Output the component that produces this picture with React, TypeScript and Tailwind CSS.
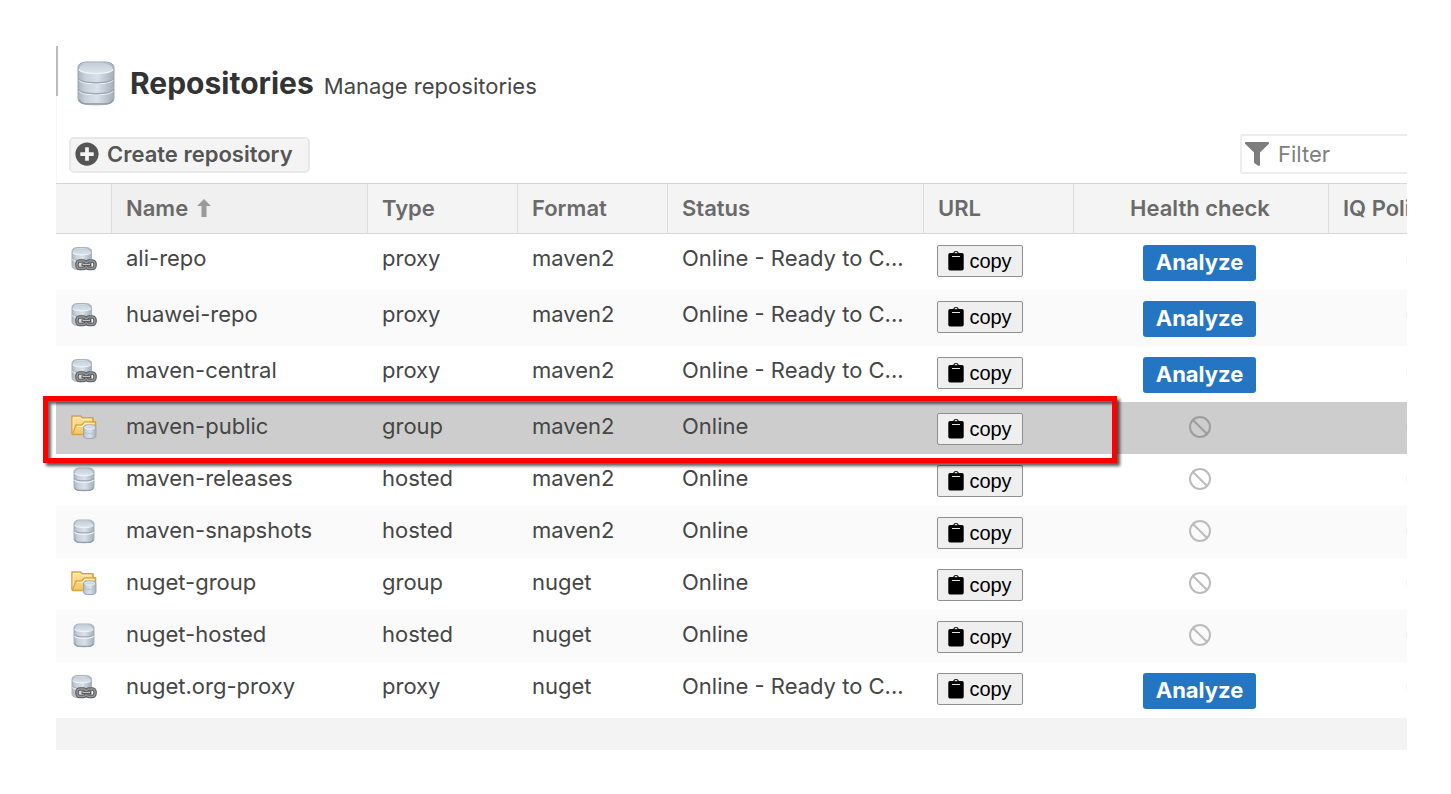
import React from "react";
import { Ban } from "lucide-react";
import { FaFilter, FaPlusCircle } from "react-icons/fa";

type Kind = "proxy" | "group" | "hosted";

interface Repository {
  name: string;
  kind: Kind;
  format: string;
  selected?: boolean;
}

const repositories: Repository[] = [
  { name: "ali-repo", kind: "proxy", format: "maven2" },
  { name: "huawei-repo", kind: "proxy", format: "maven2" },
  { name: "maven-central", kind: "proxy", format: "maven2" },
  { name: "maven-public", kind: "group", format: "maven2", selected: true },
  { name: "maven-releases", kind: "hosted", format: "maven2" },
  { name: "maven-snapshots", kind: "hosted", format: "maven2" },
  { name: "nuget-group", kind: "group", format: "nuget" },
  { name: "nuget-hosted", kind: "hosted", format: "nuget" },
  { name: "nuget.org-proxy", kind: "proxy", format: "nuget" },
];

function Gradients() {
  return (
    <svg width="0" height="0" className="absolute" aria-hidden="true">
      <defs>
        <linearGradient id="steel" x1="0" x2="1" y1="0" y2="0">
          <stop offset="0" stopColor="#a9b4bf" />
          <stop offset="0.2" stopColor="#c9d2dc" />
          <stop offset="0.55" stopColor="#d8e0e9" />
          <stop offset="1" stopColor="#a3afba" />
        </linearGradient>
        <linearGradient id="lid" x1="0" x2="0" y1="0" y2="1">
          <stop offset="0" stopColor="#c3ced9" />
          <stop offset="1" stopColor="#dbe4ec" />
        </linearGradient>
        <linearGradient id="folder" x1="0" x2="0" y1="0" y2="1">
          <stop offset="0" stopColor="#fbe5a4" />
          <stop offset="1" stopColor="#f6c65b" />
        </linearGradient>
      </defs>
    </svg>
  );
}

function DatabaseLarge() {
  return (
    <svg width="40" height="48" viewBox="0 0 40 48" aria-hidden="true">
      <path d="M2 38c0 9 36 9 36 0v3c-2 6-34 6-36 0z" fill="#000" opacity=".15" />
      <path d="M2 8C2 3 7 2 12 2h16c5 0 10 1 10 6v30c0 5-5 6-10 6H12c-5 0-10-1-10-6z" fill="url(#steel)" stroke="#9aa5af" strokeWidth="1" />
      <ellipse cx="20" cy="8" rx="16.5" ry="5" fill="url(#lid)" />
      <g fill="none">
        <path d="M3 9c2 6 32 6 34 0M3 20c3 5 31 5 34 0M3 31c3 5 31 5 34 0" stroke="#eef3f7" strokeWidth="1.2" />
        <path d="M2.500 18.500c3 5.500 32 5.500 35 0M2.500 29.500c3 5.500 32 5.500 35 0" stroke="#9ba7b2" strokeWidth="1.5" />
        <path d="M3 39.500c2 4.500 5 4.500 17 4.500s15 0 17-4.500" stroke="#929ea9" strokeWidth="1.600" />
      </g>
    </svg>
  );
}

function HostedIcon() {
  return (
    <svg width="26" height="26" viewBox="0 0 26 26" aria-hidden="true">
      <path d="M3 6c0-3 3-4 6-4h8c3 0 6 1 6 4v14.500c0 3-3 4-6 4H9c-3 0-6-1-6-4z" fill="url(#steel)" stroke="#a7b2bc" strokeWidth="1" />
      <ellipse cx="13" cy="6" rx="8.800" ry="3" fill="url(#lid)" />
      <path d="M3.500 12.500c2 3.200 17 3.200 19 0" fill="none" stroke="#9aa6b1" strokeWidth="1.200" />
      <path d="M3.500 14c2 3.200 17 3.200 19 0M3.800 7c2 3.400 16.400 3.400 18.400 0" fill="none" stroke="#f0f4f8" strokeWidth="1.200" />
      <path d="M3.500 21.500c1.500 3 4 3 9.500 3s8 0 9.500-3" fill="none" stroke="#929eaa" strokeWidth="1.300" />
    </svg>
  );
}

function ProxyIcon() {
  return (
    <svg width="26" height="26" viewBox="0 0 26 26" aria-hidden="true">
      <path d="M1 5.500C1 2.500 4 1.500 7 1.500h7.500c3 0 6 1 6 4v14c0 3-3 4-6 4H7c-3 0-6-1-6-4z" fill="url(#steel)" stroke="#a7b2bc" strokeWidth="1" />
      <ellipse cx="10.800" cy="5.500" rx="8.800" ry="2.800" fill="url(#lid)" />
      <path d="M1.800 6.500c2 3.200 16 3.200 18 0M1.500 13.200c2 3.200 16 3.200 18.500 0" fill="none" stroke="#f0f4f8" strokeWidth="1.100" />
      <path d="M1.500 12c2 3.200 16 3.200 18.500 0" fill="none" stroke="#aab5c0" strokeWidth="1.200" />
      <g fill="none">
        <rect x="6" y="15" width="9" height="7.500" rx="3" stroke="#5a5a5a" strokeWidth="3.600" />
        <rect x="15.500" y="15" width="8.500" height="7.500" rx="3" stroke="#5a5a5a" strokeWidth="3.600" />
        <rect x="6" y="15" width="9" height="7.500" rx="3" stroke="#969696" strokeWidth="1.400" />
        <rect x="15.500" y="15" width="8.500" height="7.500" rx="3" stroke="#969696" strokeWidth="1.400" />
        <path d="M10.500 18.800h9.500" stroke="#505050" strokeWidth="3" />
        <path d="M11.500 18.500h7.500" stroke="#c4c4c4" strokeWidth="1.200" />
      </g>
    </svg>
  );
}

function GroupIcon() {
  return (
    <svg width="26" height="26" viewBox="0 0 26 26" aria-hidden="true">
      <path d="M1 2h8.500l1.800 1.800H22v4h2.500V12L21 20.500H1.800L1 19.500z" fill="url(#folder)" stroke="#dfa040" strokeWidth="1.600" strokeLinejoin="round" />
      <path d="M2.200 18V3.500h6.500l1.800 1.800h10" fill="none" stroke="#fdf0c4" strokeWidth="1" />
      <path d="M1.500 20L5 11h6l2.500-3H24.500" fill="none" stroke="#e0a344" strokeWidth="1.300" />
      <path d="M6 12.300h5.500L14 9.400h9.500" fill="none" stroke="#fff2c4" strokeWidth="1.200" />
      <path d="M12.500 14c0-2.500 2-3 4-3h4.500c2 0 4 .5 4 3v7.500c0 2.500-2 3-4 3h-4.500c-2 0-4-.5-4-3z" fill="url(#steel)" stroke="#9ba8b4" strokeWidth="1" />
      <ellipse cx="18.750" cy="13.500" rx="5.200" ry="1.700" fill="url(#lid)" stroke="#f0f4f8" strokeWidth=".7" />
      <path d="M13 18c1.500 2 10 2 11.500 0" fill="none" stroke="#b4bfca" strokeWidth=".8" />
    </svg>
  );
}

const kindIcons: Record<Kind, () => React.JSX.Element> = {
  hosted: HostedIcon,
  proxy: ProxyIcon,
  group: GroupIcon,
};

function ClipboardIcon() {
  return (
    <svg width="16" height="20" viewBox="0 0 16 20" aria-hidden="true">
      <path d="M2 2h3.200C5.500.7 6.500 0 8 0s2.500.7 2.800 2H14a1.700 1.700 0 0 1 1.700 1.700v14.100a1.700 1.700 0 0 1-1.700 1.700H2A1.700 1.700 0 0 1 .3 17.800V3.700A1.700 1.700 0 0 1 2 2z" fill="#000" />
      <path d="M4 5.500h8M7 2.300a1 1 0 0 1 2 0" fill="none" stroke="#e4e4e4" strokeWidth="1.200" />
    </svg>
  );
}

const headCell = "h-[51px] border-y border-[#d6d6d6] border-l border-l-[#dddddd] pb-[2px] pl-[14px] text-left align-middle font-semibold";
const textCell = "truncate pt-2 pl-[15px]";

function Row({ repo, striped }: { repo: Repository; striped: boolean }) {
  const Icon = kindIcons[repo.kind];
  const isProxy = repo.kind === "proxy";
  const background = repo.selected ? "bg-[#cdcdcd]" : striped ? "bg-[#fafafa]" : "bg-white";
  return (
    <tr className={`${isProxy ? "h-14" : "h-[52px]"} align-top ${background}`}>
      <td className="relative pt-3 pl-[15px]">
        <Icon />
        {repo.selected && (
          <span className="pointer-events-none absolute -top-[6px] -left-[13px] z-10 h-[67px] w-[1074px] border-[5px] border-[#fe0000] shadow-[3px_3px_3px_rgba(0,0,0,0.65),inset_3px_3px_3px_rgba(0,0,0,0.6)]" />
        )}
      </td>
      <td className={textCell}>{repo.name}</td>
      <td className={textCell}>{repo.kind}</td>
      <td className={textCell}>{repo.format}</td>
      <td className={`${textCell} pr-3`}>{isProxy ? "Online - Ready to C..." : "Online"}</td>
      <td className="pt-[11px] pl-[14px]">
        <button
          type="button"
          className="flex h-8 w-[86px] items-center justify-center gap-[5px] rounded-[2px] border border-[#8f8f8f] bg-[#efefef] font-['Liberation_Sans',sans-serif] text-xl leading-6 text-black"
        >
          <ClipboardIcon />
          copy
        </button>
      </td>
      <td className="pt-[11px] pr-[2px]">
        {isProxy ? (
          <button type="button" className="mx-auto block h-9 w-[113px] rounded-[3px] bg-[#2476c3] pb-[2px] font-bold text-white">
            Analyze
          </button>
        ) : (
          <Ban className={`mx-auto mt-[2px] size-6 ${repo.selected ? "text-[#9d9d9d]" : "text-[#bcbcbc]"}`} strokeWidth={2} />
        )}
      </td>
      <td className="overflow-hidden pt-[13px] pl-[77px]">
        <Ban className="size-6 max-w-none text-black/5" strokeWidth={2} />
      </td>
    </tr>
  );
}

export default function App() {
  return (
    <main className="mr-11 ml-14 pt-[46px] font-['Inter',sans-serif] text-[22px] leading-8 text-[#464646]">
      <Gradients />
      <header className="flex h-[50px] items-end border-l-2 border-[#bababa] pl-[18px]">
        <div className="-mb-3 flex items-center gap-[14px]">
          <DatabaseLarge />
          <div className="flex items-baseline gap-[10px] pb-[3px]">
            <h1 className="text-[30px] leading-10 font-bold text-[#333333]">Repositories</h1>
            <p>Manage repositories</p>
          </div>
        </div>
      </header>

      <div className="flex items-start justify-between border-l border-[#f6f6f6] pt-[38px] pb-[9px] pl-3">
        <button
          type="button"
          className="mt-[3px] flex h-9 items-center gap-2 rounded-[5px] border-2 border-[#e8e8e8] bg-[#f4f4f4] pr-[15px] pb-[2px] pl-1 font-semibold text-[#555555]"
        >
          <FaPlusCircle className="size-6" />
          Create repository
        </button>
        <label className="flex h-10 w-[167px] items-center gap-[9px] rounded-l-[3px] border-2 border-r-0 border-[#ededed] pl-[3px]">
          <FaFilter className="size-6 shrink-0 text-[#7d7d7d]" />
          <input type="text" aria-label="Filter" placeholder="Filter" className="w-full min-w-0 outline-none placeholder:text-[#808080]" />
        </label>
      </div>

      <table className="w-full table-fixed border-separate border-spacing-0">
        <colgroup>
          <col className="w-[55px]" />
          <col className="w-[256px]" />
          <col className="w-[150px]" />
          <col className="w-[150px]" />
          <col className="w-[256px]" />
          <col className="w-[150px]" />
          <col className="w-[255px]" />
          <col />
        </colgroup>
        <thead className="bg-[#f4f4f4] text-[#6a6a6a]">
          <tr>
            <th className="border-y border-[#d6d6d6]" aria-label="Repository icon" />
            <th className={`${headCell} bg-[#f0f0f0]`} aria-sort="ascending">
              <span className="flex items-center gap-2">
                Name
                <svg width="16" height="20" viewBox="0 0 16 20" fill="#9a9a9a" aria-hidden="true">
                  <path d="M8 1l7 7h-4.500v11h-5V8H1z" />
                </svg>
              </span>
            </th>
            <th className={headCell}>Type</th>
            <th className={headCell}>Format</th>
            <th className={headCell}>Status</th>
            <th className={headCell}>URL</th>
            <th className="border-y border-l border-[#d6d6d6] border-l-[#dddddd] pr-[2px] pb-[2px] text-center font-semibold">Health check</th>
            <th className={`${headCell} overflow-hidden whitespace-nowrap border-l-[#c4c4c4]`}>IQ Policy</th>
          </tr>
        </thead>
        <tbody>
          {repositories.map((repo, index) => (
            <Row key={repo.name} repo={repo} striped={index % 2 === 1} />
          ))}
        </tbody>
      </table>
      <div className="h-8 bg-[#f3f3f3]" />
    </main>
  );
}
